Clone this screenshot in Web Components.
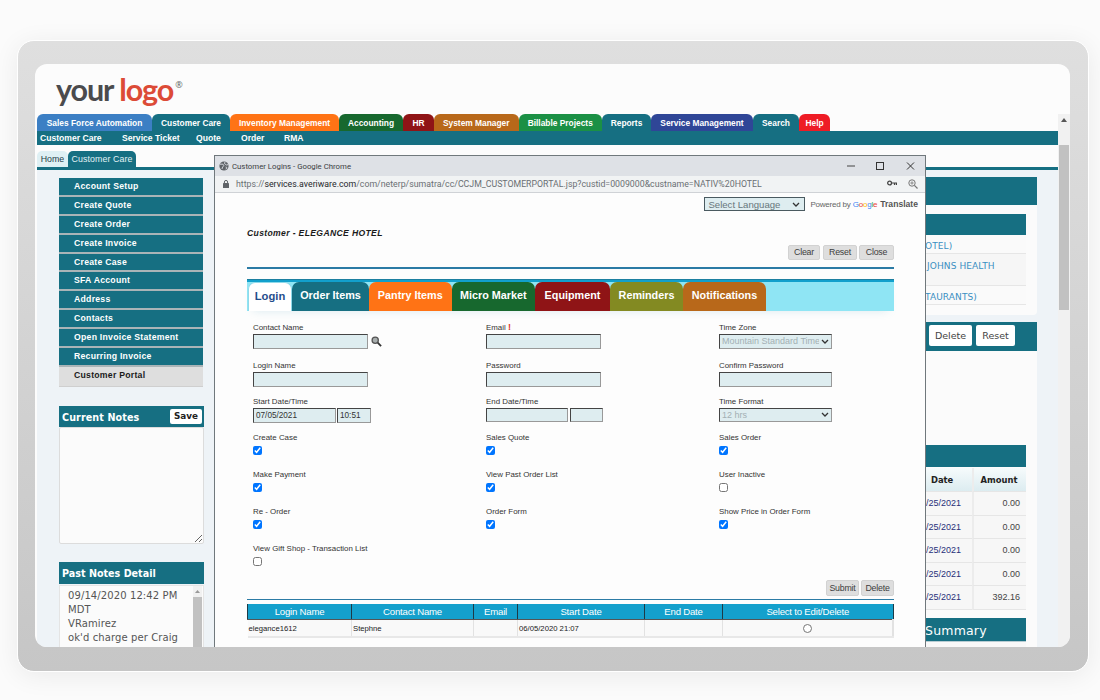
<!DOCTYPE html>
<html>
<head>
<meta charset="utf-8">
<title>Customer Portal</title>
<style>
  html, body { margin: 0; height: 700px; overflow: hidden; background: #fbfbfb; }
  body { font-family: "Liberation Sans", Arial, sans-serif; }
</style>
</head>
<body>
<device-frame>
  <brand-logo></brand-logo>
  <erp-app></erp-app>
</device-frame>

<script>
const TEAL = '#166f82';
const CHEVRON = `url("data:image/svg+xml,%3Csvg xmlns='http://www.w3.org/2000/svg' width='8' height='5'%3E%3Cpath d='M1 1l3 3 3-3' fill='none' stroke='%23333' stroke-width='1.3'/%3E%3C/svg%3E")`;

class DeviceFrame extends HTMLElement {
  constructor() {
    super();
    this.attachShadow({ mode: 'open' });
    this.shadowRoot.innerHTML = `
      <style>
        :host { display: block; box-sizing: border-box; width: 1072px; height: 632px; margin: 40px 0 0 17px;
          padding: 23px 18px 23px 17px; border: 1px solid #fff; border-radius: 17px;
          background: linear-gradient(#dfdfdf, #c6c6c6); box-shadow: 0 4px 26px rgba(0,0,0,.07); }
        .screen { position: relative; height: 583px; overflow: hidden; border-radius: 12px; background: #fcfcfc; }
      </style>
      <div class="screen"><slot></slot></div>`;
  }
}

class BrandLogo extends HTMLElement {
  constructor() {
    super();
    this.attachShadow({ mode: 'open' });
    this.shadowRoot.innerHTML = `
      <style>
        :host { display: flex; height: 50px; padding-left: 21px; box-sizing: border-box; font: 700 30.5px/51px Lato, sans-serif; letter-spacing: -1.1px; color: #4b4b4d; }
        b { font-weight: 700; color: #dc4b37; margin-left: 6px; }
        sup { font: 400 9px/9px "Open Sans", sans-serif; letter-spacing: 0; margin: 16px 0 0 2px; color: #666; }
      </style>
      <span>your</span><b>logo</b><sup>®</sup>`;
  }
}

class MainTabs extends HTMLElement {
  constructor() {
    super();
    const tabs = [
      ['Sales Force Automation', 115, '#3c7fc4'], ['Customer Care', 78, TEAL], ['Inventory Management', 109, '#ff7315'],
      ['Accounting', 64, '#17682e'], ['HR', 31, '#8f1416'], ['System Manager', 84.5, '#b8681a'],
      ['Billable Projects', 83.5, '#1b9045'], ['Reports', 49, TEAL], ['Service Management', 102, '#2f4697'],
      ['Search', 46, TEAL], ['Help', 31, '#ee1c25']
    ];
    this.attachShadow({ mode: 'open' });
    this.shadowRoot.innerHTML = `
      <style>
        :host { display: flex; height: 17px; }
        span { box-sizing: border-box; height: 17px; border-radius: 6px 6px 0 0; color: #fff; font: bold 8.4px/18px "Liberation Sans", sans-serif; text-align: center; white-space: nowrap; }
      </style>
      ${tabs.map(t => `<span style="width:${t[1]}px;background:${t[2]}">${t[0]}</span>`).join('')}`;
  }
}

class SubNav extends HTMLElement {
  constructor() {
    super();
    this.attachShadow({ mode: 'open' });
    this.shadowRoot.innerHTML = `
      <style>
        :host { display: flex; height: 14px; background: ${TEAL}; padding-left: 3px; color: #fff; font: bold 8.6px/14px "Liberation Sans", sans-serif; }
        span { white-space: nowrap; }
      </style>
      <span style="width:82px">Customer Care</span><span style="width:74px">Service Ticket</span><span style="width:45px">Quote</span><span style="width:43px">Order</span><span>RMA</span>`;
  }
}

class PageTabs extends HTMLElement {
  constructor() {
    super();
    this.attachShadow({ mode: 'open' });
    this.shadowRoot.innerHTML = `
      <style>
        :host { display: flex; height: 16px; margin-top: 6px; border-bottom: 3px solid ${TEAL}; box-sizing: content-box; font: 8.8px/16px "Liberation Sans", sans-serif; }
        span { border-radius: 5px 5px 0 0; text-align: center; white-space: nowrap; }
        .home { width: 31px; height: 16px; background: #dff0f4; color: #27424a; }
        .on { width: 68px; height: 16px; background: ${TEAL}; color: #e3f2f5; letter-spacing: .1px; }
      </style>
      <span class="home">Home</span><span class="on">Customer Care</span>`;
  }
}

class SideMenu extends HTMLElement {
  constructor() {
    super();
    const items = ['Account Setup', 'Create Quote', 'Create Order', 'Create Invoice', 'Create Case', 'SFA Account', 'Address', 'Contacts', 'Open Invoice Statement', 'Recurring Invoice'];
    this.attachShadow({ mode: 'open' });
    this.shadowRoot.innerHTML = `
      <style>
        :host { display: block; width: 144px; font: bold 8.7px/17px "Liberation Sans", sans-serif; letter-spacing: .25px; }
        div { box-sizing: border-box; height: 18.9px; padding-left: 15px; background: ${TEAL}; color: #fff; border-bottom: 2px solid #aab4b7; white-space: nowrap; }
        .on { height: 20px; background: #dedede; color: #1a1a1a; border-bottom: 1px solid #cfcfcf; line-height: 17px; }
      </style>
      ${items.map(i => `<div>${i}</div>`).join('')}<div class="on">Customer Portal</div>`;
  }
}

class CurrentNotes extends HTMLElement {
  constructor() {
    super();
    this.attachShadow({ mode: 'open' });
    this.shadowRoot.innerHTML = `
      <style>
        :host { display: block; width: 145px; margin-top: 19px; }
        .head { display: flex; justify-content: space-between; align-items: center; height: 21px; box-sizing: border-box; padding: 0 2px 0 3px; background: ${TEAL}; color: #fff; font: bold 9.6px "DejaVu Sans", sans-serif; letter-spacing: .1px; }
        .head span { padding-top: 2px; }
        button { width: 32px; height: 15px; padding: 0; border: 0; border-radius: 2px; background: #fff; color: #222; font: bold 8.8px "DejaVu Sans", sans-serif; }
        textarea { display: block; box-sizing: border-box; width: 145px; height: 117px; margin: 0; border: 1px solid #dcdcdc; border-radius: 2px; background: #fbfbfb; outline: 0; }
      </style>
      <div class="head"><span>Current Notes</span><button>Save</button></div>
      <textarea></textarea>`;
  }
}

class PastNotes extends HTMLElement {
  constructor() {
    super();
    this.attachShadow({ mode: 'open' });
    this.shadowRoot.innerHTML = `
      <style>
        :host { display: block; width: 145px; margin-top: 18px; }
        .head { height: 22px; box-sizing: border-box; padding-left: 3px; background: ${TEAL}; color: #fff; font: bold 9.6px/24px "DejaVu Sans", sans-serif; }
        .box { display: flex; justify-content: space-between; height: 70px; margin-top: 1px; background: #fbfbfb; border: 1px solid #e4e4e4; box-sizing: border-box; }
        .txt { padding: 3px 0 0 8px; color: #555; font: 10px/14px "DejaVu Sans", sans-serif; letter-spacing: .1px; white-space: nowrap; }
        .bar { position: relative; width: 9px; margin-right: 1px; background: #f1f1f1; }
        .bar i { position: absolute; left: 0; right: 0; top: 11px; bottom: 0; background: #c1c1c1; }
        .bar svg { position: absolute; left: 2px; top: 4px; }
      </style>
      <div class="head">Past Notes Detail</div>
      <div class="box">
        <div class="txt">09/14/2020 12:42 PM<br>MDT<br>VRamirez<br>ok'd charge per Craig</div>
        <div class="bar"><svg width="5" height="3"><path d="M0 3 2.5 0 5 3z" fill="#999"/></svg><i></i></div>
      </div>`;
  }
}

class CustomerPanel extends HTMLElement {
  constructor() {
    super();
    const rows = ['/25/2021|0.00', '/25/2021|0.00', '/25/2021|0.00', '/25/2021|0.00', '/25/2021|392.16'];
    this.attachShadow({ mode: 'open' });
    this.shadowRoot.innerHTML = `
      <style>
        :host { display: block; padding-top: 7px; margin-right: 21px; font: 9px "Liberation Sans", sans-serif; }
        .bar { height: 28px; background: ${TEAL}; }
        .card { background: #fbfbfb; padding: 9px 11px 10px 0; border-radius: 0 0 4px 4px; }
        .thead { height: 21px; background: ${TEAL}; }
        .r { box-sizing: border-box; padding-left: 710px; border-bottom: 1px solid #e6e6e6; color: #3a8fc2; font: 9px "DejaVu Sans", sans-serif; letter-spacing: .1px; background: #fafafa; }
        .actions { display: flex; gap: 4px; height: 29px; margin-top: 7px; padding: 3px 0 0 714px; box-sizing: border-box; background: ${TEAL}; }
        .actions span { box-sizing: border-box; height: 21px; border-radius: 2px; background: #fff; color: #444; text-align: center; font: 9.5px/21px "DejaVu Sans", sans-serif; }
        .lower { background: #fbfbfb; padding: 94px 11px 0 0; }
        .grid { display: grid; grid-template-columns: 1fr 54px; }
        .grid > div { box-sizing: border-box; border-bottom: 1px solid #e6e6e6; height: 23.6px; line-height: 23px; background: #f7f7f7; text-align: right; padding-right: 6px; color: #27307a; }
        .grid > div:nth-child(2n) { border-left: 2px solid #ececec; color: #444; }
        .grid > div:nth-child(2n+1) { padding-right: 11px; }
        .grid .th { height: 24px; margin-top: 1px; background: linear-gradient(#f6fbfc, #dcecf0); color: #222; font: bold 8.4px/25px "DejaVu Sans", sans-serif; }
        .grid .th:first-child { text-align: left; padding-left: 716px; color: #222; }
        .grid .th:nth-child(2) { text-align: center; padding: 0 2px 0 0; color: #222; margin-top: 1px; }
        .sum { height: 23px; margin-top: 8px; padding-left: 710px; background: ${TEAL}; color: #fff; font: 12.5px/25px "DejaVu Sans", sans-serif; letter-spacing: .2px; }
        .foot { height: 6px; border-top: 1px solid #b8ccd2; background: #f8f8f8; }
      </style>
      <div class="bar"></div>
      <div class="card">
        <div class="thead"></div>
        <div class="r" style="height:19px;line-height:22px">OTEL)</div>
        <div class="r" style="height:32px;line-height:24px;padding-left:712px;background:#f6f6f6">JOHNS HEALTH</div>
        <div class="r" style="height:19px;line-height:22px">TAURANTS)</div>
      </div>
      <div class="actions"><span style="width:43px">Delete</span><span style="width:39px">Reset</span></div>
      <div class="lower">
        <div class="thead" style="height:22px"></div>
        <div class="grid">
          <div class="th">Date</div><div class="th">Amount</div>
          ${rows.map(r => r.split('|').map(c => `<div>${c}</div>`).join('')).join('')}
        </div>
        <div class="sum">Summary</div>
        <div class="foot"></div>
      </div>`;
  }
}

class LoginTabs extends HTMLElement {
  constructor() {
    super();
    const tabs = [['Order Items', 77, TEAL], ['Pantry Items', 82.5, '#ff7315'], ['Micro Market', 83.5, '#17682e'], ['Equipment', 75, '#8f1416'], ['Reminders', 73, '#838a22'], ['Notifications', 83, '#b8681a']];
    this.attachShadow({ mode: 'open' });
    this.shadowRoot.innerHTML = `
      <style>
        :host { display: flex; box-sizing: border-box; height: 32px; margin-top: 10px; padding: 3px 0 0 1px; background: linear-gradient(#1c7fa0 1px, #12a0cc 1px, #12a0cc 3px, #8fe5f4 3px); box-shadow: 0 6px 10px -6px rgba(80,160,190,.2); }
        span { box-sizing: border-box; height: 29px; border-radius: 7px 7px 0 0; color: #fff; font: bold 10.8px/27px "Liberation Sans", sans-serif; text-align: center; white-space: nowrap; }
        .on { background: #fff; color: #1f4d8c; font-size: 11.2px; line-height: 26px; border: 1px solid #8fd9ea; border-bottom: 0; }
      </style>
      <span class="on" style="width:44px">Login</span>
      ${tabs.map(t => `<span style="width:${t[1]}px;background:${t[2]}">${t[0]}</span>`).join('')}`;
  }
}

class LoginForm extends HTMLElement {
  constructor() {
    super();
    this.attachShadow({ mode: 'open' });
    this.shadowRoot.innerHTML = `
      <style>
        :host { display: grid; grid-template-columns: 233px 233px 1fr; grid-template-rows: 38px 36px 36px 37px 37px 37px 37px; margin-top: 11px; padding-left: 6px; color: #333; font: 7.9px "Liberation Sans", sans-serif; }
        label { display: block; height: 11.5px; line-height: 11px; white-space: nowrap; }
        label em { color: #e03a2e; font: bold 9px "Liberation Sans", sans-serif; }
        .line { display: flex; align-items: center; gap: 1px; }
        input[type=text], select { box-sizing: border-box; height: 15px; margin: 0; padding: 0 2px; background: #deedf0; border: 1px solid; border-color: #444 #999 #999 #444; border-radius: 0; outline: 0; font: 8.2px "Liberation Sans", sans-serif; color: #333; }
        select { appearance: none; -webkit-appearance: none; width: 113px; color: #a3b0b4; font-size: 9px; padding: 0 12px 0 2px; background: #deedf0 ${CHEVRON} no-repeat right 2px center; }
        .w { width: 115px; }
        .solid { border: 1px solid #222; height: 14.5px; }
        input[type=checkbox] { display: block; margin: 2px 0 0; width: 9px; height: 9px; }
        svg { margin-left: 2px; }
      </style>
      <div><label>Contact Name</label><div class="line"><input type="text" class="w">
        <svg width="11" height="11" viewBox="0 0 12 12"><circle cx="4.6" cy="4.6" r="3.4" fill="#a8aeae" stroke="#555" stroke-width="1.4"/><path d="M7.3 7.3 11 11" stroke="#333" stroke-width="2"/></svg></div></div>
      <div><label>Email <em>!</em></label><input type="text" class="w"></div>
      <div><label>Time Zone</label><select><option>Mountain Standard Time</option></select></div>

      <div><label>Login Name</label><input type="text" class="w"></div>
      <div><label>Password</label><input type="text" class="w"></div>
      <div><label>Confirm Password</label><input type="text" style="width:113px"></div>

      <div><label>Start Date/Time</label><div class="line"><input type="text" class="solid" style="width:83px" value="07/05/2021"><input type="text" class="solid" style="width:34px" value="10:51"></div></div>
      <div><label>End Date/Time</label><div class="line" style="gap:2px"><input type="text" style="width:82px;height:14.5px"><input type="text" style="width:33px;height:14.5px"></div></div>
      <div><label>Time Format</label><select style="height:14.5px"><option>12 hrs</option></select></div>

      <div><label>Create Case</label><input type="checkbox" checked></div>
      <div><label>Sales Quote</label><input type="checkbox" checked></div>
      <div><label>Sales Order</label><input type="checkbox" checked></div>

      <div><label>Make Payment</label><input type="checkbox" checked></div>
      <div><label>View Past Order List</label><input type="checkbox" checked></div>
      <div><label>User Inactive</label><input type="checkbox"></div>

      <div><label>Re - Order</label><input type="checkbox" checked></div>
      <div><label>Order Form</label><input type="checkbox" checked></div>
      <div><label>Show Price in Order Form</label><input type="checkbox" checked></div>

      <div><label>View Gift Shop - Transaction List</label><input type="checkbox"></div>`;
  }
}

class LoginTable extends HTMLElement {
  constructor() {
    super();
    this.attachShadow({ mode: 'open' });
    this.shadowRoot.innerHTML = `
      <style>
        :host { display: block; margin-top: 4px; }
        table { width: 647px; table-layout: fixed; border-collapse: collapse; }
        th { height: 15px; padding: 0; background: #14a0cc; color: #fff; font: 400 9.6px "Liberation Sans", sans-serif; letter-spacing: -.2px; border-right: 1px solid #1d3a46; border-bottom: 1px solid #555; }
        th:first-child { border-left: 1px solid #1d3a46; }
        td { height: 16px; padding: 0 1px; background: #f9f9f9; color: #222; font: 7.7px "Liberation Sans", sans-serif; border-right: 1px solid #e2e2e2; border-bottom: 2px solid #e8e8e8; white-space: nowrap; }
        td:last-child { text-align: center; border-right: 2px solid #e2e2e2; }
        td input { display: block; margin: 0 auto; width: 9px; height: 9px; }
      </style>
      <table>
        <colgroup><col style="width:104px"><col style="width:122px"><col style="width:44px"><col style="width:127px"><col style="width:78px"><col></colgroup>
        <tr><th>Login Name</th><th>Contact Name</th><th>Email</th><th>Start Date</th><th>End Date</th><th>Select to Edit/Delete</th></tr>
        <tr><td>elegance1612</td><td>Stephne</td><td></td><td>06/05/2020 21:07</td><td></td><td><input type="radio"></td></tr>
      </table>`;
  }
}

class BrowserWindow extends HTMLElement {
  constructor() {
    super();
    this.attachShadow({ mode: 'open' });
    this.shadowRoot.innerHTML = `
      <style>
        :host { position: absolute; left: 179px; top: 91px; box-sizing: border-box; width: 712px; height: 500px; border: 1px solid #70787c; border-bottom: 0; background: #fdfdfd; }
        .title { display: flex; align-items: center; height: 20px; padding-left: 4px; background: #dee1e6; color: #3c4043; font: 7.8px Roboto, sans-serif; }
        .title svg.g { margin-right: 3px; }
        .ctl { margin-left: auto; display: flex; align-items: center; }
        .ctl svg { display: block; width: 30px; height: 12px; }
        .url { display: flex; align-items: center; height: 17px; padding-left: 8px; background: #f1f3f4; border-bottom: 1px solid #cfd2d6; box-sizing: border-box; color: #6a6f73; font: 8.77px Roboto, sans-serif; white-space: nowrap; }
        .url b { font-weight: 400; color: #26292c; }
        .url .tail { margin-left: auto; display: flex; gap: 11px; padding-right: 7px; }
        .body { padding: 4px 31px 0 32px; }
        .lang { display: flex; justify-content: flex-end; align-items: center; height: 14px; margin-right: -24px; color: #666; font: 8px "Liberation Sans", sans-serif; letter-spacing: -.2px; white-space: nowrap; }
        .lang select { appearance: none; -webkit-appearance: none; box-sizing: border-box; width: 101px; height: 14px; margin-right: 5px; padding: 0 12px 0 3px; border: 1px solid #4a5a60; border-radius: 0; background: #deedf0 ${CHEVRON} no-repeat right 4px center; color: #67777c; font: 9.6px "Liberation Sans", sans-serif; letter-spacing: 0; }
        .lang i { font: 8px "Liberation Sans", sans-serif; margin: 0 3px 0 2px; letter-spacing: -.2px; }
        .lang strong { color: #555; font-size: 8.6px; letter-spacing: 0; }
        h1 { height: 12px; margin: 16px 0 0; color: #1b1b1b; font: italic bold 8.6px/12px "Liberation Sans", sans-serif; letter-spacing: .35px; }
        .btns { display: flex; justify-content: flex-end; gap: 2px; }
        .btns span { box-sizing: border-box; height: 15px; border-radius: 2px; background: #dedede; border: 1px solid #d2d2d2; color: #3d3d3d; text-align: center; font: 8.8px/13px "Liberation Sans", sans-serif; letter-spacing: -.2px; }
        .low span { height: 16px; line-height: 14px; }
        .rule { height: 2px; margin-top: 7px; background: #2b7ba5; }
        .thin { height: 1px; margin-top: 3px; background: #2b7ba5; }
      </style>
      <div class="title">
        <svg class="g" width="10" height="10" viewBox="0 0 10 10"><circle cx="5" cy="5" r="4.6" fill="#5f6368"/><path d="M1 3.2h3l1 1.4-1.4 1.2L3 8M6 1l-.6 1.6L7.6 4l1.6-.4M6.6 6l1.2.4-.8 2" fill="none" stroke="#dee1e6" stroke-width=".9"/></svg>
        <span>Customer Logins - Google Chrome</span>
        <div class="ctl">
          <svg viewBox="0 0 30 12"><path d="M12 6h8" stroke="#444" stroke-width="1"/></svg>
          <svg viewBox="0 0 30 12"><rect x="11.5" y="2.5" width="7" height="7" fill="none" stroke="#333"/></svg>
          <svg viewBox="0 0 30 12"><path d="M12 2.5l7 7m0-7l-7 7" stroke="#333" fill="none"/></svg>
        </div>
      </div>
      <div class="url">
        <svg width="6" height="8" viewBox="0 0 6 8" style="margin-right:7px"><rect y="3" width="6" height="5" rx=".6" fill="#5f6368"/><path d="M1.4 3V2a1.6 1.6 0 0 1 3.2 0v1" fill="none" stroke="#5f6368"/></svg>
        <span>https://<b>services.averiware.com</b>/com/neterp/sumatra/cc/CCJM_CUSTOMERPORTAL.jsp?custid=0009000&amp;custname=NATIV%20HOTEL</span>
        <div class="tail">
          <svg width="10" height="8" viewBox="0 0 10 8"><circle cx="2.6" cy="4" r="1.9" fill="none" stroke="#444" stroke-width="1.3"/><path d="M4.5 4H10M7.5 4v2M9.4 4v2" stroke="#444" stroke-width="1.2" fill="none"/></svg>
          <svg width="10" height="10" viewBox="0 0 10 10"><circle cx="4" cy="4" r="3.2" fill="none" stroke="#777"/><path d="M6.4 6.4 9.5 9.5" stroke="#777" stroke-width="1.2"/><path d="M2.3 4h3.4M4 2.3v3.4" stroke="#777" stroke-width=".8"/></svg>
        </div>
      </div>
      <div class="body">
        <div class="lang">
          <select><option>Select Language</option></select>
          <span>Powered by</span>
          <i><span style="color:#4285f4">G</span><span style="color:#ea4335">o</span><span style="color:#fbbc05">o</span><span style="color:#4285f4">g</span><span style="color:#34a853">l</span><span style="color:#ea4335">e</span></i>
          <strong>Translate</strong>
        </div>
        <h1>Customer - ELEGANCE HOTEL</h1>
        <div class="btns" style="margin-top:6px"><span style="width:32px;margin-right:1px">Clear</span><span style="width:34px">Reset</span><span style="width:35px">Close</span></div>
        <div class="rule"></div>
        <login-tabs></login-tabs>
        <login-form></login-form>
        <div class="btns low"><span style="width:33px">Submit</span><span style="width:33px">Delete</span></div>
        <div class="thin"></div>
        <login-table></login-table>
      </div>`;
  }
}

class ErpApp extends HTMLElement {
  constructor() {
    super();
    this.attachShadow({ mode: 'open' });
    this.shadowRoot.innerHTML = `
      <style>
        :host { display: flex; height: 533px; padding-left: 2px; }
        .app { width: 1021px; display: flex; flex-direction: column; height: 533px; overflow: hidden; }
        .cols { flex: 1; display: grid; grid-template-columns: 178px 1fr; background: #eef3f7; min-height: 0; }
        .side { padding: 8px 0 0 22px; overflow: hidden; }
        .sb { position: relative; width: 12px; background: #f1f1f1; }
        .sb i { position: absolute; left: 1px; right: 1px; top: 31px; height: 165px; background: #c1c1c1; }
        .sb svg { position: absolute; left: 3px; top: 4px; }
      </style>
      <div class="app">
        <main-tabs></main-tabs>
        <sub-nav></sub-nav>
        <page-tabs></page-tabs>
        <div class="cols">
          <div class="side"><side-menu></side-menu><current-notes></current-notes><past-notes></past-notes></div>
          <customer-panel></customer-panel>
        </div>
      </div>
      <div class="sb"><svg width="6" height="4"><path d="M0 4 3 0 6 4z" fill="#555"/></svg><i></i></div>
      <browser-window></browser-window>`;
  }
}

customElements.define('device-frame', DeviceFrame);
customElements.define('brand-logo', BrandLogo);
customElements.define('main-tabs', MainTabs);
customElements.define('sub-nav', SubNav);
customElements.define('page-tabs', PageTabs);
customElements.define('side-menu', SideMenu);
customElements.define('current-notes', CurrentNotes);
customElements.define('past-notes', PastNotes);
customElements.define('customer-panel', CustomerPanel);
customElements.define('login-tabs', LoginTabs);
customElements.define('login-form', LoginForm);
customElements.define('login-table', LoginTable);
customElements.define('browser-window', BrowserWindow);
customElements.define('erp-app', ErpApp);
</script>
</body>
</html>
